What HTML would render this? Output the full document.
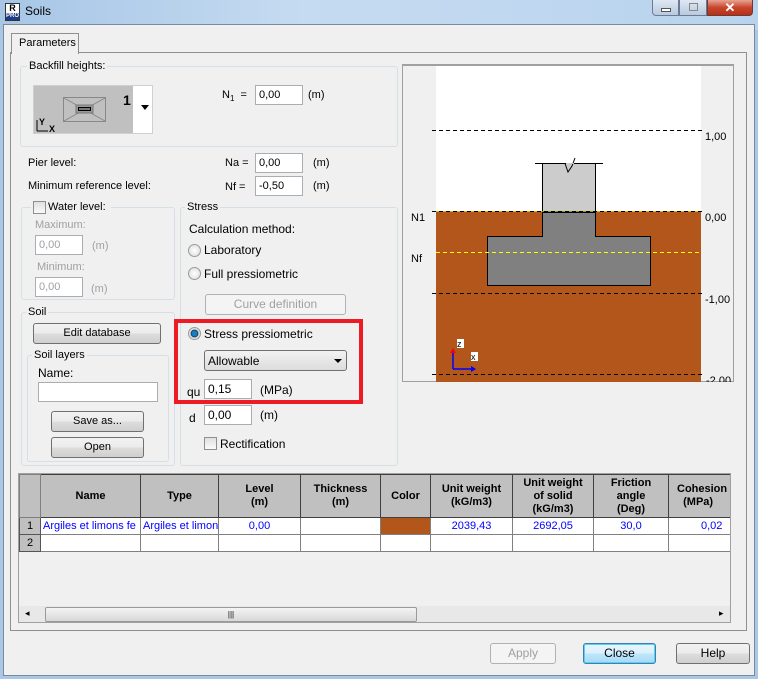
<!DOCTYPE html><html><head><style>
*{box-sizing:border-box;margin:0;padding:0}
body{width:758px;height:679px;overflow:hidden;background:#a9c8e8;font-family:"Liberation Sans",sans-serif;font-size:11px;color:#000;position:relative}
.a{position:absolute}
.grp{position:absolute;border:1px solid #d5dfe5;border-radius:3px}
.lg{position:absolute;background:#f0f0f0;padding:0 2px;top:-7px;left:6px;line-height:13px}
.inp{position:absolute;background:#fff;border:1px solid #abadb3;height:20px;padding:2px 3px;line-height:14px}
.btn{position:absolute;border:1px solid #707070;border-radius:3px;background:linear-gradient(#f2f2f2,#ebebeb 50%,#dddddd 51%,#cfcfcf);text-align:center;line-height:19px;height:21px}
.dis{color:#a0a0a0}
.rad{position:absolute;width:13px;height:13px;border-radius:50%;border:1px solid #9a9a9a;background:radial-gradient(#fff,#d8d8d8)}
.chk{position:absolute;width:13px;height:13px;border:1px solid #8e8f8f;background:linear-gradient(#e0e0e0,#fafafa)}
table{border-collapse:collapse;table-layout:fixed}
td{border:1px solid #808080;height:17px;font-size:11px;overflow:hidden;white-space:nowrap;text-align:center;color:#0000ff}
th{border:1px solid #404040;background:#c0c0c0;font-weight:bold;font-size:11px;line-height:13px;height:43px}
</style></head><body>
<div class="a" style="left:0;top:0;width:758px;height:30px;background:linear-gradient(90deg,#a7c6e6,#c5dbf1 40%,#b9d3ee)"></div>
<div class="a" style="left:5px;top:3px;width:15px;height:18px;background:#fff;border:1px solid #333;font-size:9px;font-weight:bold;text-align:center;line-height:9px">R<div style="background:#1c3b8a;color:#fff;font-size:6px;line-height:7px">PRO</div></div>
<div class="a" style="left:25px;top:4px;font-size:12px">Soils</div>
<div class="a" style="left:652px;top:0;width:27px;height:16px;border:1px solid #6b7b93;border-top:0;border-radius:0 0 0 4px;background:linear-gradient(#dfe8f3,#b9c9de)"><div class="a" style="left:8px;top:8px;width:10px;height:4px;background:#fff;border:1px solid #555"></div></div>
<div class="a" style="left:679px;top:0;width:28px;height:16px;border:1px solid #6b7b93;border-top:0;background:linear-gradient(#dfe8f3,#b9c9de)"><div class="a" style="left:9px;top:3px;width:9px;height:8px;border:1px solid #888"></div></div>
<div class="a" style="left:707px;top:0;width:46px;height:16px;border:1px solid #6b3b33;border-top:0;border-radius:0 0 4px 0;background:linear-gradient(#e8a493,#c7452d 50%,#b8301a);color:#fff;font-weight:bold;text-align:center;line-height:15px;font-size:13px">✕</div>
<div class="a" style="left:3px;top:24px;width:752px;height:652px;background:#f0f0f0;border:1px solid #7a8a9c"></div>
<div class="a" style="left:10px;top:52px;width:737px;height:579px;border:1px solid #8e8f8f"></div>
<div class="a" style="left:11px;top:33px;width:68px;height:21px;border:1px solid #8e8f8f;border-bottom:0;background:#f0f0f0;padding:3px 7px">Parameters</div>
<div class="grp" style="left:20px;top:66px;width:378px;height:81px"><div class="lg">Backfill heights:</div></div>
<div class="a" style="left:33px;top:85px;width:120px;height:49px;border:1px solid #d0d0d0;background:#fff"></div>
<div class="a" style="left:34px;top:86px;width:99px;height:47px;background:#c0c0c0"></div>
<svg class="a" style="left:34px;top:86px" width="120" height="47"><rect x="29.5" y="11.5" width="42" height="24" fill="none" stroke="#888"/><line x1="30" y1="12" x2="71" y2="35" stroke="#888"/><line x1="71" y1="12" x2="30" y2="35" stroke="#888"/><rect x="42" y="19" width="17" height="8" fill="#999" stroke="#777"/><rect x="44.5" y="21.5" width="12" height="3" fill="#777" stroke="#000"/><path d="M3 45V34M3 45H14" stroke="#000"/><text x="5" y="39" font-size="9" font-weight="bold" font-family="Liberation Sans">Y</text><text x="15" y="46" font-size="9" font-weight="bold" font-family="Liberation Sans">X</text><text x="89" y="19" font-size="14" font-weight="bold" font-family="Liberation Sans">1</text><path d="M107 19h8l-4 5z" fill="#000"/></svg>
<div class="a" style="left:222px;top:89px">N<sub style="font-size:8px">1</sub>&nbsp; =</div>
<div class="inp" style="left:255px;top:85px;width:48px">0,00</div>
<div class="a" style="left:308px;top:89px">(m)</div>
<div class="a" style="left:28px;top:157px">Pier level:</div>
<div class="a" style="left:28px;top:180px">Minimum reference level:</div>
<div class="a" style="left:225px;top:157px">Na =</div>
<div class="a" style="left:225px;top:181px">Nf =</div>
<div class="inp" style="left:255px;top:153px;width:48px">0,00</div>
<div class="inp" style="left:255px;top:176px;width:48px">-0,50</div>
<div class="a" style="left:313px;top:157px">(m)</div>
<div class="a" style="left:313px;top:180px">(m)</div>
<div class="grp" style="left:21px;top:207px;width:154px;height:93px"></div>
<div class="a" style="left:31px;top:200px;width:80px;height:14px;background:#f0f0f0"></div>
<div class="chk" style="left:33px;top:201px"></div>
<div class="a" style="left:48px;top:201px">Water level:</div>
<div class="a dis" style="left:35px;top:219px">Maximum:</div>
<div class="inp dis" style="left:35px;top:235px;width:48px">0,00</div>
<div class="a dis" style="left:92px;top:240px">(m)</div>
<div class="a dis" style="left:37px;top:261px">Minimum:</div>
<div class="inp dis" style="left:35px;top:277px;width:48px">0,00</div>
<div class="a dis" style="left:91px;top:283px">(m)</div>
<div class="grp" style="left:21px;top:312px;width:154px;height:154px"><div class="lg" style="left:4px">Soil</div></div>
<div class="btn" style="left:33px;top:323px;width:128px">Edit database</div>
<div class="grp" style="left:27px;top:355px;width:142px;height:107px"><div class="lg" style="left:4px">Soil layers</div></div>
<div class="a" style="left:38px;top:366px;font-size:12px">Name:</div>
<div class="inp" style="left:38px;top:382px;width:120px"></div>
<div class="btn" style="left:51px;top:411px;width:93px">Save as...</div>
<div class="btn" style="left:51px;top:437px;width:93px">Open</div>
<div class="grp" style="left:180px;top:207px;width:218px;height:259px"><div class="lg" style="left:4px">Stress</div></div>
<div class="a" style="left:189px;top:222px;font-size:12px">Calculation method:</div>
<div class="rad" style="left:188px;top:244px"></div><div class="a" style="left:204px;top:243px;font-size:12px">Laboratory</div>
<div class="rad" style="left:188px;top:267px"></div><div class="a" style="left:204px;top:267px;font-size:12px">Full pressiometric</div>
<div class="btn dis" style="left:205px;top:294px;width:141px;border-color:#adb2b5;background:#f4f4f4;font-size:12px">Curve definition</div>
<div class="a" style="left:174px;top:319px;width:189px;height:85px;border:4px solid #ed1c24"></div>
<div class="rad" style="left:188px;top:327px;background:radial-gradient(#1a7fc0 30%,#0d3c66 45%,#e0e0e0 55%)"></div><div class="a" style="left:204px;top:327px;font-size:12px">Stress pressiometric</div>
<div class="a" style="left:204px;top:350px;width:143px;height:21px;border:1px solid #707070;border-radius:3px;background:linear-gradient(#f2f2f2,#dcdcdc);padding:3px 3px;font-size:12px">Allowable<div class="a" style="right:4px;top:8px;width:0;height:0;border:4px solid transparent;border-top:4px solid #000;border-bottom:0"></div></div>
<div class="a" style="left:187px;top:385px;font-size:12px">qu</div>
<div class="inp" style="left:204px;top:379px;width:48px;font-size:12px">0,15</div>
<div class="a" style="left:260px;top:383px;font-size:12px">(MPa)</div>
<div class="a" style="left:189px;top:411px;font-size:12px">d</div>
<div class="inp" style="left:204px;top:405px;width:48px;font-size:12px">0,00</div>
<div class="a" style="left:260px;top:408px;font-size:12px">(m)</div>
<div class="chk" style="left:204px;top:437px"></div><div class="a" style="left:220px;top:437px;font-size:12px">Rectification</div>
<div class="a" style="left:402px;top:64px;width:332px;height:318px;border:1px solid #a0a0a0;border-top:2px solid #a0a0a0;background:#f0f0f0"></div>
<svg class="a" style="left:403px;top:66px" width="331" height="316" font-family="Liberation Sans" font-size="11">
<rect x="33" y="0" width="265" height="316" fill="#fff"/>
<rect x="33" y="145" width="265" height="171" fill="#b3561c"/>
<rect x="139.5" y="97.5" width="53" height="48" fill="#ccc" stroke="#000"/>
<line x1="132" y1="97.5" x2="200" y2="97.5" stroke="#000"/>
<path d="M162 97.5 L165 106 L169 100 L172 92" fill="none" stroke="#000"/>
<line x1="163" y1="97.5" x2="171" y2="97.5" stroke="#ccc"/>
<path d="M139.5 146.5h53v24h55v49h-163v-49h55z" fill="#808080" stroke="#000"/>
<line x1="33" y1="186.5" x2="298" y2="186.5" stroke="#ff0" stroke-dasharray="4,3"/>
<line x1="33" y1="145.5" x2="298" y2="145.5" stroke="#ff0" stroke-dasharray="4,3" opacity=".6"/>
<g stroke="#000" stroke-dasharray="4,3"><line x1="29" y1="64.5" x2="302" y2="64.5"/><line x1="29" y1="145.5" x2="302" y2="145.5"/><line x1="29" y1="227.5" x2="302" y2="227.5"/><line x1="29" y1="308.5" x2="302" y2="308.5"/></g>
<text x="302" y="74">1,00</text><text x="302" y="155">0,00</text><text x="302" y="237">-1,00</text><text x="303" y="318">-2,00</text>
<text x="8" y="155">N1</text><text x="8" y="196">Nf</text>
<path d="M50 303V283M50 303H72" stroke="#00f" stroke-width="1.5" fill="none"/><path d="M47 287l3-5 3 5z" fill="red"/><path d="M68 300l5 3-5 3z" fill="#00f"/>
<rect x="54" y="273" width="7" height="9" fill="#fff"/><text x="54" y="281" font-size="9">z</text><rect x="68" y="286" width="7" height="9" fill="#fff"/><text x="68" y="294" font-size="9">x</text>
</svg>
<div class="a" style="left:18px;top:473px;width:713px;height:150px;border:1px solid #a0a0a0;background:#f0f0f0;overflow:hidden">
<table style="width:740px"><colgroup><col style="width:21px"><col style="width:100px"><col style="width:78px"><col style="width:82px"><col style="width:80px"><col style="width:50px"><col style="width:82px"><col style="width:81px"><col style="width:75px"><col style="width:91px"></colgroup>
<tr><th style="border-color:#808080"></th><th>Name</th><th>Type</th><th>Level<br>(m)</th><th>Thickness<br>(m)</th><th>Color</th><th>Unit weight<br>(kG/m3)</th><th>Unit weight<br>of solid<br>(kG/m3)</th><th>Friction<br>angle<br>(Deg)</th><th style="text-align:left;padding-left:8px">Cohesion<br>&nbsp;&nbsp;(MPa)</th></tr>
<tr style="background:#fff"><td style="background:#c0c0c0;color:#000;border:1px solid #555">1</td><td style="text-align:left;padding-left:2px">Argiles et limons fe</td><td style="text-align:left;padding-left:2px">Argiles et limon</td><td>0,00</td><td></td><td style="background:#b3561c"></td><td>2039,43</td><td>2692,05</td><td>30,0</td><td style="text-align:left;padding-left:32px">0,02</td></tr>
<tr style="background:#fff"><td style="background:#c0c0c0;color:#000;border:1px solid #555;height:15px">2</td><td></td><td></td><td></td><td></td><td></td><td></td><td></td><td></td><td></td></tr>
</table>
<div class="a" style="left:0;top:132px;width:713px;height:17px;background:#e8e8e8"><div class="a" style="left:6px;top:2px;font-size:9px">◂</div><div class="a" style="left:26px;top:1px;width:372px;height:15px;border:1px solid #9a9a9a;border-radius:2px;background:linear-gradient(#f4f4f4,#d8d8d8);text-align:center;font-size:8px;line-height:13px">|||</div><div class="a" style="left:700px;top:2px;font-size:9px">▸</div></div>
</div>
<div class="btn dis" style="left:490px;top:643px;width:66px;border-color:#adb2b5;background:#f4f4f4;font-size:12px">Apply</div>
<div class="btn" style="left:583px;top:643px;width:73px;border-color:#3c7fb1;background:linear-gradient(#eaf6fd,#d9f0fc 50%,#bee6fd 51%,#a7d9f5);box-shadow:inset 0 0 0 1px #5ad0f5;font-size:12px">Close</div>
<div class="btn" style="left:676px;top:643px;width:74px;font-size:12px">Help</div>
</body></html>
